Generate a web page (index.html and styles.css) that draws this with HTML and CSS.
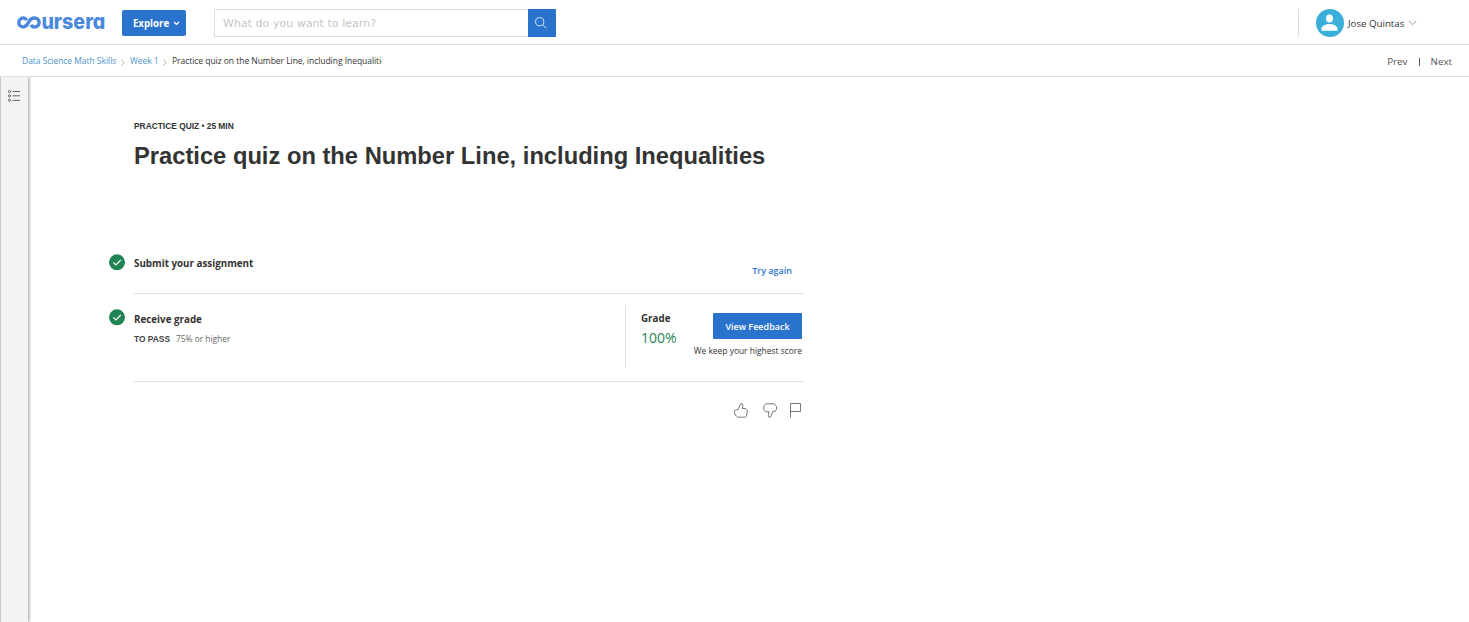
FILE: index.html
```html
<!DOCTYPE html>
<html lang="en">
<head>
<meta charset="utf-8">
<title>Practice quiz on the Number Line, including Inequalities</title>
<link rel="stylesheet" href="styles.css">
</head>
<body>
<header class="topbar">
  <svg class="logo" width="90" height="20" viewBox="0 0 90 20" role="img" aria-label="coursera">
    <path class="logo-loop" d="M10.800 7.100C10 5.800 8.700 5.100 7.200 5.100C4.700 5.100 2.800 7 2.800 9.500s1.900 4.400 4.400 4.400c2.300 0 3.800-1.500 5.300-4.400C14 6.500 15.800 5.100 18.600 5.100C21.200 5.100 23.100 7 23.100 9.500s-1.900 4.400-4.500 4.400c-1.600 0-2.900-.8-3.600-2.100"/>
    <text class="logo-text" x="25.400" y="15.600" textLength="64" lengthAdjust="spacingAndGlyphs">ursera</text>
  </svg>
  <button class="explore">Explore
    <svg width="7" height="5" viewBox="0 0 7 5"><path d="M1 1l2.500 2.400L6 1" fill="none" stroke="#fff" stroke-width="1.400"/></svg>
  </button>
  <form class="search">
    <input class="search-input" type="text" placeholder="What do you want to learn?">
    <button class="search-button" type="button" aria-label="Search">
      <svg width="12" height="12" viewBox="0 0 12 12" fill="none" stroke="#fff" stroke-width=".8"><circle cx="4.700" cy="4.700" r="4.100"/><path d="M7.700 7.700l3.600 3.700"/></svg>
    </button>
  </form>
  <div class="account">
    <svg class="avatar" width="28" height="28" viewBox="0 0 28 28"><circle cx="14" cy="14" r="14" fill="#3bafda"/><ellipse cx="13.500" cy="9.500" rx="3.500" ry="4.100" fill="#fff"/><path d="M5.500 21.800v-2.200c0-2.600 4.600-4.500 8-4.500s8 1.900 8 4.500v2.200z" fill="#fff"/></svg>
    <span class="username">Jose Quintas</span>
    <svg width="9" height="6" viewBox="0 0 9 6"><path d="M.8 1l3.700 3.700L8.200 1" fill="none" stroke="#777" stroke-width=".8"/></svg>
  </div>
</header>
<nav class="crumbbar">
  <a class="crumb course">Data Science Math Skills</a>
  <svg class="sep" width="4" height="7" viewBox="0 0 4 7"><path d="M.5 .5l2.700 3-2.700 3"/></svg>
  <a class="crumb week">Week 1</a>
  <svg class="sep" width="4" height="7" viewBox="0 0 4 7"><path d="M.5 .5l2.700 3-2.700 3"/></svg>
  <span class="crumb current">Practice quiz on the Number Line, including Inequalities</span>
  <div class="pager"><a class="prev">Prev</a><i class="pager-line"></i><a class="next">Next</a></div>
</nav>
<div class="shell">
  <aside class="rail">
    <svg width="12" height="12" viewBox="0 0 12 12" fill="none" stroke="#555" stroke-width=".9"><circle cx="1.500" cy="1.600" r="1.100"/><circle cx="1.500" cy="5.900" r="1.100"/><circle cx="1.500" cy="10.300" r="1.100"/><path d="M4.500 1.500H12M4.500 5.800H12M4.500 10.400H12"/></svg>
  </aside>
  <main class="content">
    <div class="eyebrow"><span>PRACTICE QUIZ • 25 MIN</span></div>
    <h1 class="title"><span>Practice quiz on the Number Line, including Inequalities</span></h1>
    <section class="row submit">
      <svg class="check" width="16" height="17" viewBox="0 0 16 17"><circle cx="8" cy="8.300" r="8" fill="#1f8354"/><path d="M4.300 8.400l2.600 2.600 4.900-5" fill="none" stroke="#fff" stroke-width="1.200"/></svg>
      <h2 class="row-title"><span>Submit your assignment</span></h2>
      <a class="try">Try again</a>
    </section>
    <section class="row grade-row">
      <svg class="check" width="16" height="17" viewBox="0 0 16 17"><circle cx="8" cy="8.300" r="8" fill="#1f8354"/><path d="M4.300 8.400l2.600 2.600 4.900-5" fill="none" stroke="#fff" stroke-width="1.200"/></svg>
      <div class="receive">
        <h2 class="row-title"><span>Receive grade</span></h2>
        <p class="pass"><b class="pass-label">TO PASS</b><span class="pass-value">75% or higher</span></p>
      </div>
      <div class="result">
        <div class="grade"><div class="grade-label">Grade</div><div class="grade-value">100%</div></div>
        <div class="feedback"><button class="view"><span>View Feedback</span></button><p class="keep">We keep your highest score</p></div>
      </div>
    </section>
    <div class="reactions">
      <svg width="14" height="15" viewBox="0 0 14 15"><path d="M.5 8.500L1.500 6.800H4L6.600.800L8.300.800L8.900 2.400L8.300 5.500H11.500L13.400 7.200L13.200 9.500L12.300 13.200L11.300 14.200H3.800L2.300 12.800L.9 12z"/></svg>
      <svg width="14" height="15" viewBox="0 0 14 15"><path d="M.5 6.700L1.300 2.300L2.700.800H10.200L12 1.500L13.500 3.500V6.200L12.300 8.300H10L7.700 13.800L5.900 14.200L5.300 12.300L6.200 8.800H2.500z"/></svg>
      <svg class="flag" width="11" height="15" viewBox="0 0 11 15"><path d="M.5 14.500V.5H10.500V8.500H.5"/></svg>
    </div>
  </main>
</div>
</body>
</html>
```

FILE: styles.css
```css
* { box-sizing: border-box; }
body { margin: 0; height: 622px; overflow: hidden; background: #fff; color: #333; font-family: "Open Sans", sans-serif; font-size: 9px; }
button, input { font: inherit; margin: 0; border: 0; padding: 0; }
h1, h2, p { margin: 0; }
svg { display: block; flex: none; }
span, a { white-space: nowrap; }
.topbar { height: 45px; border-bottom: 1px solid #ddd; display: flex; align-items: flex-start; padding-left: 16px; }
.logo { margin-top: 13px; overflow: visible; }
.logo-loop { fill: none; stroke: #4a89dc; stroke-width: 3.500; }
.logo-text { font-family: Inter, sans-serif; font-weight: 800; font-size: 20.500px; font-feature-settings: "cv11"; fill: #4a89dc; }
.explore { margin: 10px 0 0 16px; width: 64px; height: 26px; background: #2a73cc; color: #fff; border-radius: 2px; display: flex; align-items: center; justify-content: center; gap: 4px; padding-left: 5px; font-size: 9.700px; font-weight: 700; }
.search { display: flex; margin: 9px 0 0 28px; height: 28px; }
.search-input { width: 314px; border: 1px solid #ddd; border-right: 0; padding: 0 8px; font-family: "DejaVu Sans", sans-serif; font-size: 11px; letter-spacing: .04px; }
.search-input::placeholder { color: #c5c5c5; opacity: 1; }
.search-button { width: 28px; background: #2a73cc; display: flex; align-items: center; justify-content: center; padding: 0 3px 1px 0; border-radius: 0 1px 1px 0; }
.account { margin: 9px 52px 0 auto; height: 28px; border-left: 1px solid #ddd; padding-left: 17px; display: flex; align-items: center; }
.username { margin: 1px 3px 0 4px; width: 57px; font-size: 9.700px; }
.crumbbar { height: 32px; border-bottom: 1px solid #ddd; display: flex; align-items: center; padding: 0 17px 0 22px; }
.crumb { font-size: 8.500px; letter-spacing: -.04px; color: #5294cb; height: 12px; line-height: 12px; }
.course { width: 95px; }
.week { width: 29px; }
.current { color: #333; width: 210px; overflow: hidden; letter-spacing: -.04px; }
.sep { margin: 3px 5px 0 4px; fill: none; stroke: #aaa; stroke-width: .9; }
.pager { margin: 2px 0 0 auto; display: flex; align-items: center; font-size: 9.800px; color: #555; line-height: 12px; }
.pager-line { width: 1px; height: 8px; background: #555; margin: 0 11px; }
.shell { display: flex; height: 545px; }
.rail { width: 28px; background: #f3f3f3; border-left: 1px solid #ccc; box-shadow: 1px 0 3px rgba(0,0,0,.4); padding: 13px 0 0 7px; clip-path: inset(0 -5px 0 0); }
.content { width: 695px; margin-left: 81px; }
.eyebrow { margin: 43px 0 0 25px; height: 12px; line-height: 12px; font-family: "Liberation Sans", sans-serif; font-weight: 700; font-size: 8.400px; }
.title { margin: 9px 0 0 25px; height: 30px; line-height: 30px; font-family: "Liberation Sans", sans-serif; font-weight: 700; font-size: 23.730px; }
.row { position: relative; display: flex; align-items: flex-start; }
.row::after { content: ""; position: absolute; left: 25px; right: 0; bottom: 0; height: 1px; background: #ddd; }
.check { margin-right: 9px; }
.row-title { font-size: 9.800px; font-weight: 700; line-height: 14px; }
.submit { margin-top: 83px; height: 40px; }
.submit .row-title { margin-top: 3px; }
.try { margin: 10px 12px 0 auto; color: #2a73cc; font-size: 9px; font-weight: 600; line-height: 14px; }
.grade-row { height: 88px; padding-top: 15px; }
.receive .row-title { margin-top: 4px; }
.pass { display: flex; gap: 6px; margin-top: 6px; line-height: 12px; font-size: 8.400px; color: #666; }
.pass-label { font-family: "Liberation Sans", sans-serif; color: #444; font-size: 8.400px; }
.result { margin: -4px 0 0 auto; width: 179px; height: 63px; border-left: 1px solid #ddd; display: flex; justify-content: space-between; padding: 0 2px 0 15px; }
.grade-label { margin-top: 7px; font-size: 9.800px; font-weight: 700; line-height: 14px; }
.grade-value { margin-top: 3px; color: #1f8354; font-size: 14px; line-height: 18px; }
.feedback { display: flex; flex-direction: column; align-items: flex-end; padding-top: 8px; }
.view { width: 89px; height: 26px; border-radius: 1px; background: #2a73cc; color: #fff; font-weight: 600; font-size: 9px; }
.keep { margin-top: 6px; font-size: 8.430px; line-height: 12px; white-space: nowrap; }
.reactions { display: flex; justify-content: flex-end; gap: 15px; margin-top: 21px; padding-right: 2px; fill: none; stroke: #555; stroke-width: .8; }
.flag { margin-left: -2px; margin-right: 1px; }
```
